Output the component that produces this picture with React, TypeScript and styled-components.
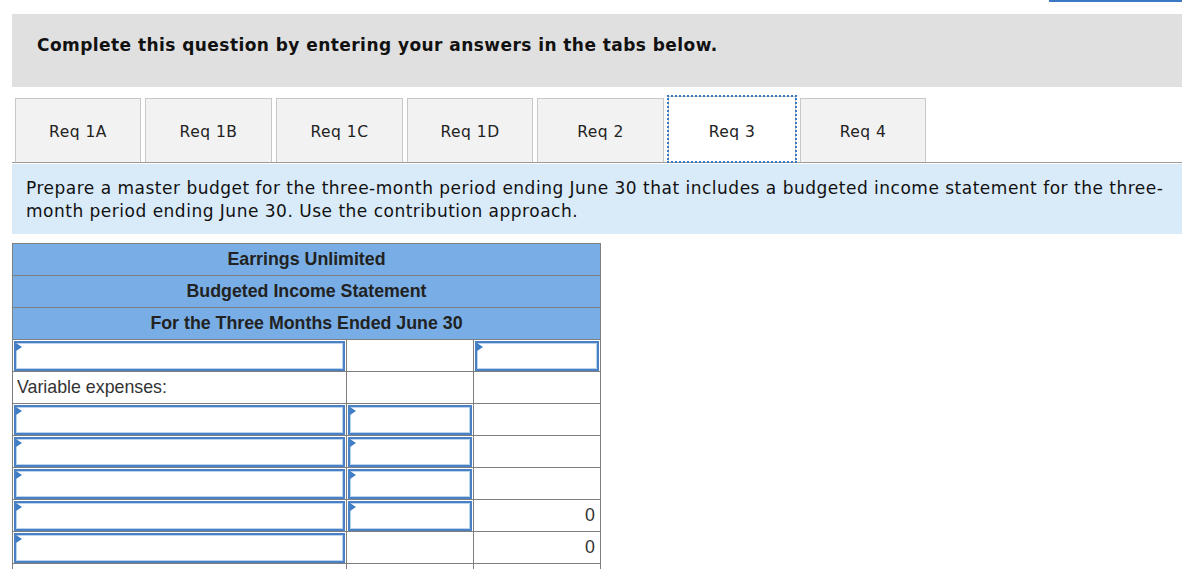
import React from "react";
import styled, { createGlobalStyle } from "styled-components";

const Global = createGlobalStyle`
  html, body { margin: 0; padding: 0; background: #fff; }
  body { font-family: "DejaVu Sans", Verdana, sans-serif; color: #000; }
  * { box-sizing: border-box; }
`;

const Page = styled.div`
  padding-left: 12px;
  width: 1182px;
`;

const TopStrip = styled.div`
  display: flex;
  justify-content: flex-end;
  height: 14px;
`;

const TopBar = styled.div`
  width: 133px;
  height: 2px;
  background: #3a78c3;
`;

const Banner = styled.div`
  background: #e0e0e0;
  height: 73px;
  padding: 22px 0 0 25px;
  font-weight: bold;
  font-size: 17px;
  line-height: 18px;
  letter-spacing: 0.44px;
  color: #111;
  white-space: nowrap;
`;

const TabBar = styled.div`
  margin-top: 11px;
  display: flex;
  gap: 4px;
  padding-left: 3px;
  height: 65px;
  border-bottom: 1px solid #9c9c9c;
`;

const Tab = styled.div<{ $active?: boolean; $w: number }>`
  width: ${(p) => p.$w}px;
  height: 64px;
  display: flex;
  align-items: center;
  justify-content: center;
  padding-top: 3px;
  font-size: 15.5px;
  letter-spacing: 0.5px;
  color: #222;
  background: ${(p) => (p.$active ? "#fff" : "#f2f2f2")};
  border: 1px solid #c8c8c8;
  border-bottom: none;
  ${(p) =>
    p.$active
      ? `outline: 2px dotted #3a78c3; outline-offset: -1px; height: 66px; margin-top: -2px; padding-top: 5px; position: relative; z-index: 1;`
      : ""}
`;

const Info = styled.div`
  margin-top: 1px;
  background: #d9ebf9;
  height: 70px;
  padding: 13px 0 0 14px;
  font-size: 17px;
  line-height: 23px;
  letter-spacing: 0.5px;
  color: #111;
  white-space: nowrap;
`;

const Sheet = styled.table`
  margin-top: 9px;
  border-collapse: collapse;
  width: 588px;
  table-layout: fixed;
  font-family: "Liberation Sans", Arial, sans-serif;
  font-size: 17.8px;
`;

const HeadCell = styled.td`
  background: #78aee5;
  border: 1px solid #7f7f7f;
  height: 32px;
  padding: 0;
  text-align: center;
  font-weight: bold;
  color: #222;
`;

const Cell = styled.td<{ $total?: boolean }>`
  border: 1px solid #7f7f7f;
  ${(p) => (p.$total ? "border-top: 1px solid #000;" : "")}
  height: 32px;
  padding: 0;
  color: #222;
  vertical-align: middle;
`;

const Label = styled.div`
  padding-left: 4px;
  color: #333;
`;

const Num = styled.div`
  text-align: right;
  padding-right: 5px;
  color: #333;
`;

const InputBox = styled.div`
  position: relative;
  height: 30px;
  margin: 0 1px;
  border: 2px solid #4a80c4;
  box-shadow: inset 0 0 0 1px #bcd3ee;
  background: #fff;
  &::before {
    content: "";
    position: absolute;
    left: 0;
    top: 0;
    border-top: 4px solid transparent;
    border-bottom: 4px solid transparent;
    border-left: 6px solid #3f7dc4;
  }
`;

const tabs = [
  { t: "Req 1A", w: 126 },
  { t: "Req 1B", w: 127 },
  { t: "Req 1C", w: 127 },
  { t: "Req 1D", w: 126 },
  { t: "Req 2", w: 127 },
  { t: "Req 3", w: 128, active: true },
  { t: "Req 4", w: 126 },
];

type Row = {
  a: string;
  b: string;
  c: string;
  total?: boolean;
};

const rows: Row[] = [
  { a: "input", b: "", c: "input" },
  { a: "Variable expenses:", b: "", c: "" },
  { a: "input", b: "input", c: "" },
  { a: "input", b: "input", c: "" },
  { a: "input", b: "input", c: "" },
  { a: "input", b: "input", c: "0" },
  { a: "input", b: "", c: "0", total: true },
  { a: "", b: "", c: "" },
];

function Content({ v, kind }: { v: string; kind: "label" | "num" }) {
  if (v === "input") return <InputBox />;
  if (!v) return null;
  return kind === "label" ? <Label>{v}</Label> : <Num>{v}</Num>;
}

export default function App() {
  return (
    <>
      <Global />
      <Page>
        <TopStrip>
          <TopBar />
        </TopStrip>
        <Banner>Complete this question by entering your answers in the tabs below.</Banner>
        <TabBar>
          {tabs.map((t) => (
            <Tab key={t.t} $w={t.w} $active={t.active}>
              {t.t}
            </Tab>
          ))}
        </TabBar>
        <Info>
          Prepare a master budget for the three-month period ending June 30 that includes a budgeted income statement for the three-
          <br />
          month period ending June 30. Use the contribution approach.
        </Info>
        <Sheet>
          <colgroup>
            <col style={{ width: 334 }} />
            <col style={{ width: 127 }} />
            <col style={{ width: 127 }} />
          </colgroup>
          <tbody>
            <tr><HeadCell colSpan={3}>Earrings Unlimited</HeadCell></tr>
            <tr><HeadCell colSpan={3}>Budgeted Income Statement</HeadCell></tr>
            <tr><HeadCell colSpan={3}>For the Three Months Ended June 30</HeadCell></tr>
            {rows.map((r, i) => (
              <tr key={i}>
                <Cell><Content v={r.a} kind="label" /></Cell>
                <Cell $total={r.total}><Content v={r.b} kind="num" /></Cell>
                <Cell $total={r.total}><Content v={r.c} kind="num" /></Cell>
              </tr>
            ))}
          </tbody>
        </Sheet>
      </Page>
    </>
  );
}
